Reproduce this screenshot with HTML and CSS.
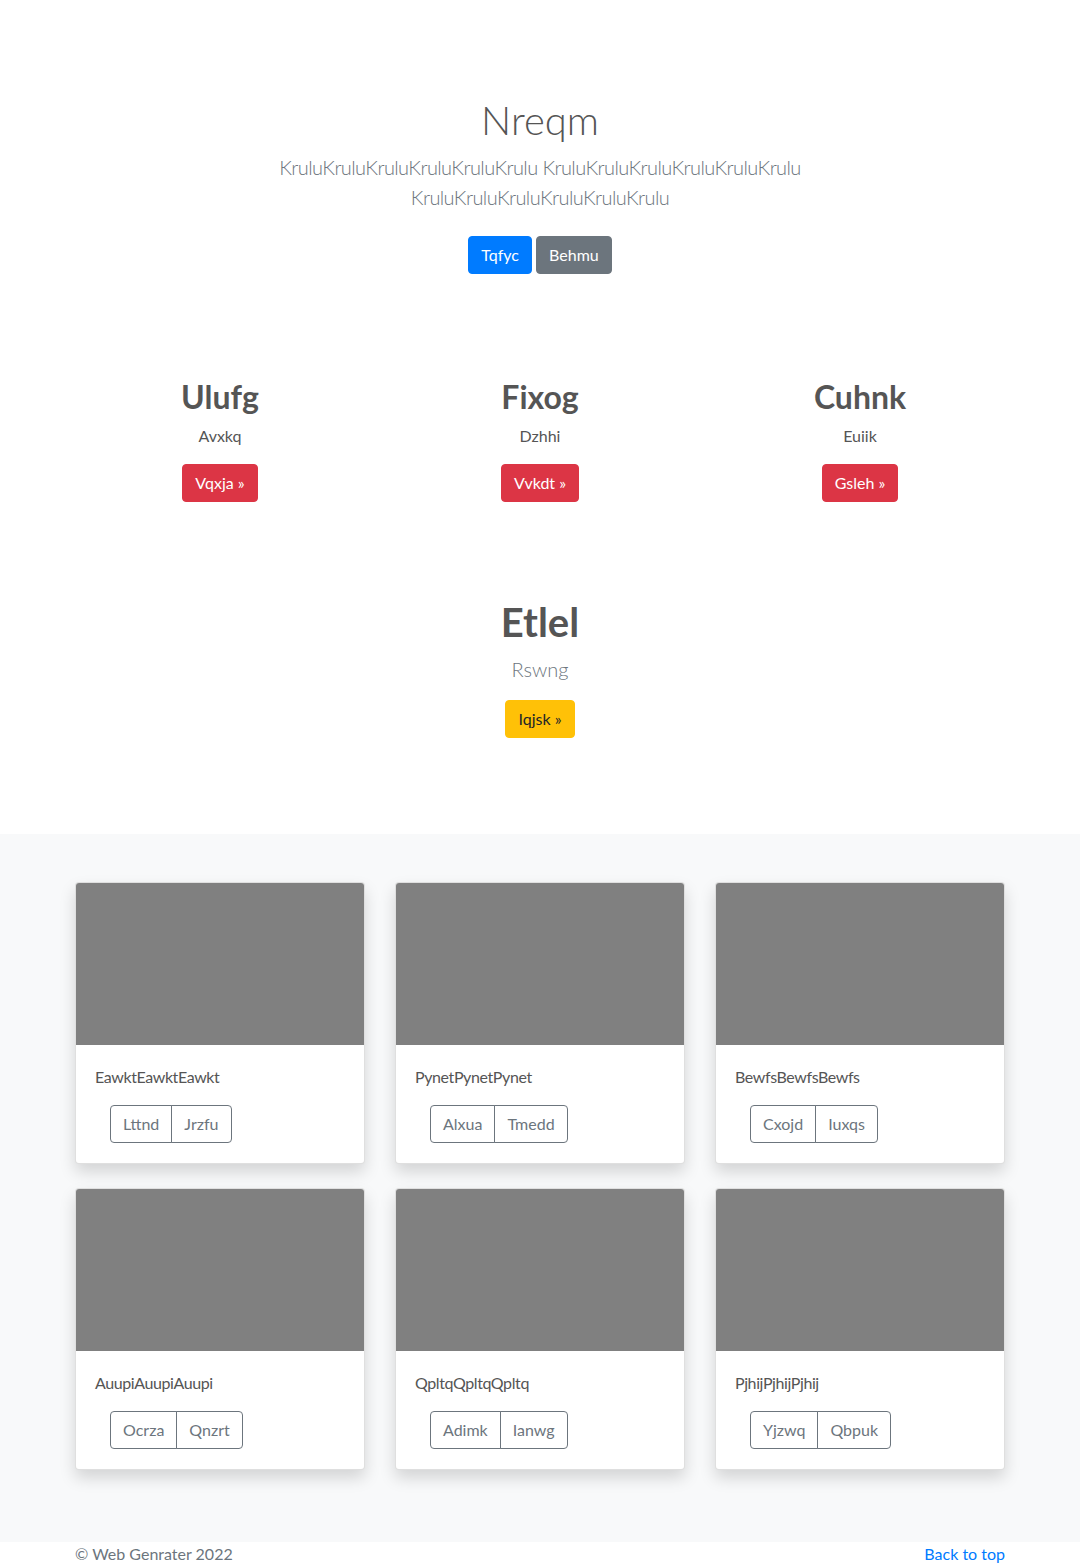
FILE: index.html
```html
<!DOCTYPE html>
<html lang="en">
<head>
<meta charset="utf-8">
<title>Nreqm</title>
<link rel="stylesheet" href="styles.css">
</head>
<body>
<main>
  <section class="hero">
    <div class="container">
      <h1 class="hero-title">Nreqm</h1>
      <p class="lead muted hero-lead">KruluKruluKruluKruluKruluKrulu KruluKruluKruluKruluKruluKrulu KruluKruluKruluKruluKruluKrulu</p>
      <p class="hero-actions">
        <a class="btn btn-primary hero-btn" href="#">Tqfyc</a>
        <a class="btn btn-secondary hero-btn" href="#">Behmu</a>
      </p>
    </div>
  </section>

  <section class="features">
    <div class="container">
      <div class="feature-row">
        <div class="feature">
          <h2 class="feature-title">Ulufg</h2>
          <p class="feature-text">Avxkq</p>
          <a class="btn btn-danger" href="#">Vqxja &raquo;</a>
        </div>
        <div class="feature">
          <h2 class="feature-title">Fixog</h2>
          <p class="feature-text">Dzhhi</p>
          <a class="btn btn-danger" href="#">Vvkdt &raquo;</a>
        </div>
        <div class="feature">
          <h2 class="feature-title">Cuhnk</h2>
          <p class="feature-text">Euiik</p>
          <a class="btn btn-danger" href="#">Gsleh &raquo;</a>
        </div>
      </div>
      <div class="feature-single">
        <h2 class="feature-title big">Etlel</h2>
        <p class="lead single-lead">Rswng</p>
        <a class="btn btn-warning" href="#">Iqjsk &raquo;</a>
      </div>
    </div>
  </section>

  <section class="album">
    <div class="container">
      <div class="card-grid">
        <div class="card">
          <div class="card-img"></div>
          <div class="card-body">
            <p class="card-text">EawktEawktEawkt</p>
            <div class="card-actions">
              <div class="btn-group"><a class="btn btn-outline" href="#">Lttnd</a><a class="btn btn-outline" href="#">Jrzfu</a></div>
            </div>
          </div>
        </div>
        <div class="card">
          <div class="card-img"></div>
          <div class="card-body">
            <p class="card-text">PynetPynetPynet</p>
            <div class="card-actions">
              <div class="btn-group"><a class="btn btn-outline" href="#">Alxua</a><a class="btn btn-outline" href="#">Tmedd</a></div>
            </div>
          </div>
        </div>
        <div class="card">
          <div class="card-img"></div>
          <div class="card-body">
            <p class="card-text">BewfsBewfsBewfs</p>
            <div class="card-actions">
              <div class="btn-group"><a class="btn btn-outline" href="#">Cxojd</a><a class="btn btn-outline" href="#">Iuxqs</a></div>
            </div>
          </div>
        </div>
        <div class="card">
          <div class="card-img"></div>
          <div class="card-body">
            <p class="card-text">AuupiAuupiAuupi</p>
            <div class="card-actions">
              <div class="btn-group"><a class="btn btn-outline" href="#">Ocrza</a><a class="btn btn-outline" href="#">Qnzrt</a></div>
            </div>
          </div>
        </div>
        <div class="card">
          <div class="card-img"></div>
          <div class="card-body">
            <p class="card-text">QpltqQpltqQpltq</p>
            <div class="card-actions">
              <div class="btn-group"><a class="btn btn-outline" href="#">Adimk</a><a class="btn btn-outline" href="#">Ianwg</a></div>
            </div>
          </div>
        </div>
        <div class="card">
          <div class="card-img"></div>
          <div class="card-body">
            <p class="card-text">PjhijPjhijPjhij</p>
            <div class="card-actions">
              <div class="btn-group"><a class="btn btn-outline" href="#">Yjzwq</a><a class="btn btn-outline" href="#">Qbpuk</a></div>
            </div>
          </div>
        </div>
      </div>
    </div>
  </section>
</main>

<footer class="footer">
  <div class="container footer-inner">
    <p class="footer-copy">&copy; Web Genrater 2022</p>
    <p class="footer-top"><a href="#">Back to top</a></p>
  </div>
</footer>
</body>
</html>
```

FILE: styles.css
```css
* { box-sizing: border-box; }

html, body {
  margin: 0;
  padding: 0;
}

body {
  font-family: Lato, "Open Sans", "Liberation Sans", sans-serif;
  font-size: 16px;
  line-height: 1.5;
  color: #555555;
  background: #ffffff;
}

a { text-decoration: none; }

.container {
  width: 960px;
  margin: 0 auto;
  padding: 0 15px;
}

/* Hero */
.hero {
  padding-top: 96px;
  padding-bottom: 48px;
  text-align: center;
}

.hero-title {
  margin: 0 0 8px;
  font-size: 40px;
  line-height: 1.2;
  font-weight: 300;
  color: #555555;
}

.lead {
  font-size: 20px;
  font-weight: 300;
  line-height: 1.5;
}

.muted { color: #6c757d; }

.hero-lead {
  max-width: 640px;
  margin: 0 auto 16px;
  letter-spacing: -0.6px;
}

.hero-actions {
  margin: 0 0 16px;
}

.hero-btn {
  margin: 8px 0;
}

/* Buttons */
.btn {
  display: inline-block;
  font-size: 16px;
  line-height: 24px;
  padding: 6px 12px;
  border: 1px solid transparent;
  border-radius: 4px;
  font-weight: 400;
  vertical-align: middle;
}

.btn-primary { background: #007bff; border-color: #007bff; color: #fff; }
.btn-secondary { background: #6c757d; border-color: #6c757d; color: #fff; }
.btn-danger { background: #dc3545; border-color: #dc3545; color: #fff; }
.btn-warning { background: #ffc107; border-color: #ffc107; color: #212529; }

.btn-outline {
  background: transparent;
  border-color: #6c757d;
  color: #6c757d;
}

/* Features */
.features {
  text-align: center;
  padding-top: 32px;
  padding-bottom: 96px;
}

.feature-row {
  display: grid;
  grid-template-columns: repeat(3, 1fr);
  gap: 30px;
}

.feature-title {
  margin: 0 0 8px;
  font-size: 32px;
  line-height: 1.2;
  font-weight: 700;
  color: #555555;
}

.feature-title.big {
  font-size: 40px;
}

.feature-text {
  margin: 0 0 16px;
}

.feature-single {
  margin-top: 96px;
}

.single-lead {
  margin: 0 0 16px;
  color: #6c757d;
}

/* Album */
.album {
  background: #f8f9fa;
  padding: 48px 0 72px;
}

.card-grid {
  display: grid;
  grid-template-columns: repeat(3, 1fr);
  column-gap: 30px;
  row-gap: 24px;
}

.card {
  background: #fff;
  border: 1px solid rgba(0, 0, 0, 0.125);
  border-radius: 4px;
  box-shadow: 0 8px 16px rgba(0, 0, 0, 0.15);
  overflow: hidden;
}

.card-img {
  height: 162px;
  background: #808080;
}

.card-body {
  padding: 20px 19px 20px;
}

.card-text {
  margin: 0 0 16px;
  font-size: 16px;
  color: #555555;
  letter-spacing: -0.4px;
}

.card-actions {
  padding-left: 15px;
}

.btn-group {
  display: inline-flex;
}

.btn-group .btn + .btn {
  margin-left: -1px;
}

.btn-group .btn:first-child {
  border-top-right-radius: 0;
  border-bottom-right-radius: 0;
}

.btn-group .btn:last-child {
  border-top-left-radius: 0;
  border-bottom-left-radius: 0;
}

/* Footer */
.footer {
  color: #6c757d;
}

.footer-inner {
  display: flex;
  justify-content: space-between;
}

.footer-inner p {
  margin: 0;
}

.footer-top a {
  color: #007bff;
}
```
